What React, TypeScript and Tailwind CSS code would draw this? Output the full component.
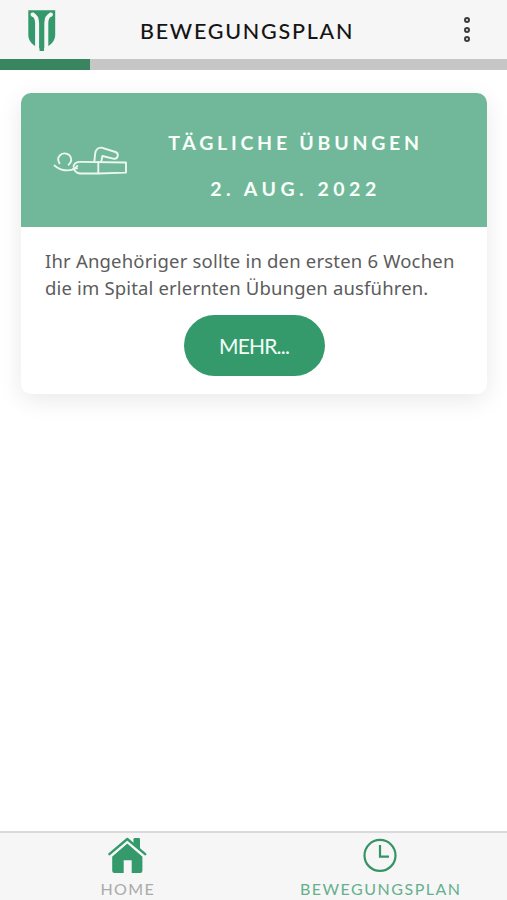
import React from "react";

function Shield() {
  return (
    <svg width="28" height="42" viewBox="0 0 28 42" fill="none">
      <path d="M0.3 0.3H27.2V25C27.2 30 24 34 19 36.8L16 38.5V41H11.5V38.5L8.5 36.8C3.5 34 0.3 30 0.3 25Z" fill="#349a6c" />
      <path d="M4.3 4.3C7.5 5.8 9.1 8.6 9.1 13V41.5M23.3 4.3C20 5.8 18.3 8.6 18.3 13V41.5" stroke="#f6f6f6" strokeWidth="4" />
      <circle cx="4.6" cy="4.6" r="2.1" fill="#f6f6f6" />
      <circle cx="22.9" cy="4.6" r="2.1" fill="#f6f6f6" />
    </svg>
  );
}

function Exercise() {
  return (
    <svg width="76" height="30" viewBox="0 0 76 30" fill="none" stroke="#ecf7ef" strokeWidth="1.9" strokeLinecap="round" strokeLinejoin="round">
      <path d="M6.5 17.2C4.9 14.5 4.6 11.8 6.5 9.8C9 6.8 13.5 6.6 16.5 9.3C19.3 12.1 18.7 16.5 15.6 18.7" />
      <path d="M1.5 19.5C4.5 22 7.5 24 11.5 24.2C16 24.6 18.5 25 21.5 22.6L24.3 20" />
      <path d="M20.5 20.3C21.5 16.8 23.3 15.9 27 15.9L73 16.5V26.6L45 27.5H28C24 27.5 21.8 25.5 20.5 22.3H24" />
      <path d="M45.3 15.9V27.3M41.3 15.9L42.2 7.5C42.8 3.4 44.2 1.4 48.5 1.6L62.5 6C66 7.2 65.5 13 61.2 12.8L49.4 10L48.2 15.9" />
    </svg>
  );
}

function HomeIcon() {
  return (
    <svg width="40" height="38" viewBox="0 0 40 38" fill="#349a6c">
      <path d="M26.5 2.2Q26.5 1 27.7 1H32Q33 1 33 2.2V13L26.5 7Z" />
      <path d="M5.2 19.4L20.3 6.5L35.4 19.4V33.8Q35.4 36 33.2 36H24.7V23.2H16.7V36H7.4Q5.2 36 5.2 33.8Z" />
      <path d="M3.5 19.5L20.3 5.1L37.1 19.5" fill="none" stroke="#f6f6f6" strokeWidth="1.8" />
      <path d="M2.4 17.2L20.3 2L38.2 17.2" fill="none" stroke="#349a6c" strokeWidth="2.4" strokeLinecap="round" strokeLinejoin="round" />
    </svg>
  );
}

export default function App() {
  return (
    <div className="flex h-[900px] w-full flex-col overflow-hidden bg-white font-['Lato',sans-serif]">
      <header className="flex h-[59px] shrink-0 items-center bg-[#f6f6f6] pt-0.5">
        <div className="w-[140px] shrink-0 pl-[27.5px]"><Shield /></div>
        <h1 className="mt-px flex-1 whitespace-nowrap text-[21.5px] font-medium leading-7 tracking-[1.75px] text-[#151515]">BEWEGUNGSPLAN</h1>
        <div className="mb-[2px] mr-[37px] flex flex-col gap-[3.6px]">
          <span className="size-[6px] rounded-full border-2 border-[#3b3b3b]" />
          <span className="size-[6px] rounded-full border-2 border-[#3b3b3b]" />
          <span className="size-[6px] rounded-full border-2 border-[#3b3b3b]" />
        </div>
      </header>
      <div className="h-[10.5px] shrink-0 bg-[#c6c6c6]"><div className="h-full w-[90px] bg-[#38855f]" /></div>

      <main className="flex-1 px-[21px] pt-[23.5px]">
        <section className="h-[301px] w-[466px] overflow-hidden rounded-[10px] bg-white shadow-[0_6px_24px_rgba(0,0,0,0.09)]">
          <div className="flex h-[134px] bg-[#71b799]">
            <div className="w-[106px] shrink-0 pl-8 pt-[53px]"><Exercise /></div>
            <div className="w-[337px] pt-[27px] text-center text-[19.5px] font-bold leading-[46px] text-[#f8fffa]">
              <p className="tracking-[3.75px]">TÄGLICHE ÜBUNGEN</p>
              <p className="tracking-[4.5px]">2. AUG. 2022</p>
            </div>
          </div>
          <p className="whitespace-nowrap pl-6 pt-5 font-['Noto_Sans',sans-serif] text-[18.5px] leading-[27px] text-[#5c5c5c]">
            <span className="block tracking-[0.19px]">Ihr Angehöriger sollte in den ersten 6 Wochen</span>
            <span className="block tracking-[0.16px]">die im Spital erlernten Übungen ausführen.</span>
          </p>
          <button className="mx-auto mt-[14px] flex h-[61px] w-[141px] items-center justify-center rounded-full bg-[#349a6c] text-[21px] tracking-[-0.8px] text-[#f2fff7]">MEHR...</button>
        </section>
      </main>

      <footer className="grid h-[69px] shrink-0 grid-cols-2 border-t-2 border-[#d9d9d9] bg-[#f6f6f6]">
        <div className="flex flex-col items-center pt-1">
          <HomeIcon />
          <span className="mt-1 pl-0.5 text-[16px] leading-5 tracking-[1.4px] text-[#aaa]">HOME</span>
        </div>
        <div className="flex flex-col items-center pt-[3px]">
          <svg width="38" height="38" viewBox="0 0 38 38" fill="none" stroke="#369366" strokeWidth="2.2">
            <circle cx="19" cy="19.4" r="15.5" /><path d="M19 9V20.7H28" />
          </svg>
          <span className="mt-[5px] pl-px text-[16px] leading-5 tracking-[1.5px] text-[#65af8c]">BEWEGUNGSPLAN</span>
        </div>
      </footer>
    </div>
  );
}
